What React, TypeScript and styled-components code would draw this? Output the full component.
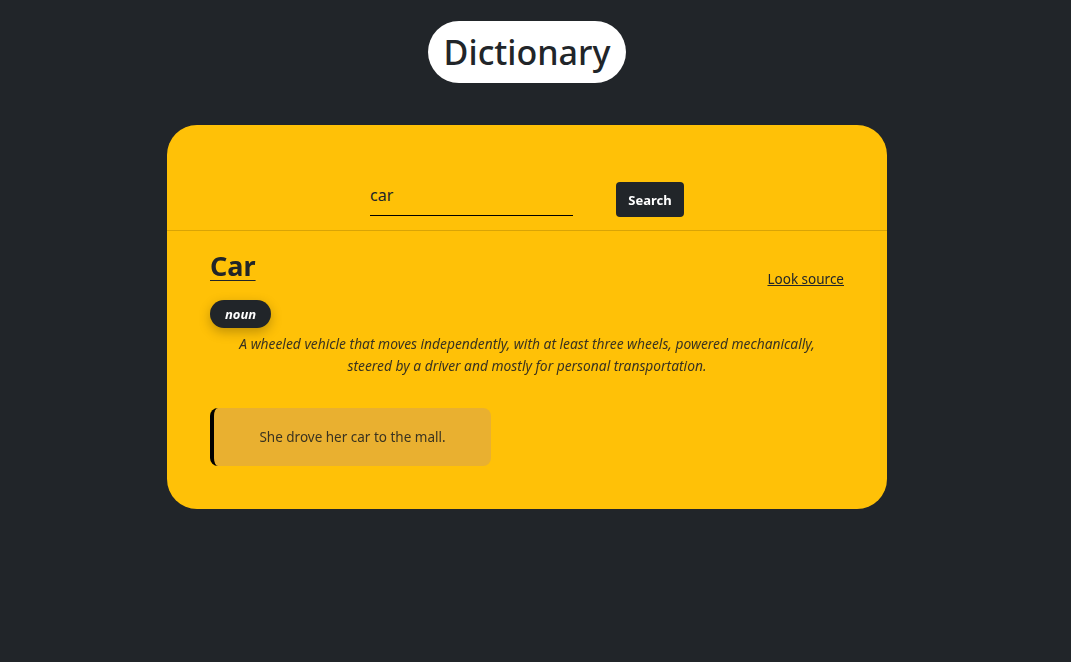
import React from "react";
import styled, { createGlobalStyle } from "styled-components";

const Global = createGlobalStyle`
  html, body { margin: 0; padding: 0; background: #212529; }
  body { font-family: "Noto Sans", "Open Sans", sans-serif; color: #212529; }
  * { box-sizing: border-box; }
`;

const Page = styled.div`
  width: 1054px;
  min-height: 662px;
  display: flex;
  flex-direction: column;
  align-items: center;
  padding-top: 21px;
`;

const TitlePill = styled.h1`
  margin: 0;
  background: #fff;
  border-radius: 32px;
  height: 62px;
  padding: 0 16px;
  display: flex;
  align-items: center;
  font-size: 34px;
  font-weight: 500;
  color: #212529;
`;

const Card = styled.main`
  margin-top: 42px;
  width: 720px;
  height: 384px;
  background: #ffc107;
  border-radius: 30px;
  display: flex;
  flex-direction: column;
`;

const SearchBar = styled.form`
  height: 106px;
  border-bottom: 1px solid #d9a406;
  display: flex;
  justify-content: center;
  align-items: flex-end;
  gap: 43px;
  padding-bottom: 14px;
`;

const Input = styled.input`
  width: 203px;
  height: 30px;
  border: none;
  border-bottom: 1px solid #000;
  background: transparent;
  font-family: inherit;
  font-size: 16px;
  color: #212529;
  padding: 0 0 12px;
  outline: none;
  caret-color: #000;
`;

const Button = styled.button`
  height: 35px;
  width: 68px;
  background: #212529;
  color: #fff;
  border: none;
  border-radius: 4px;
  font-family: inherit;
  font-weight: 700;
  font-size: 13px;
  margin-bottom: -1px;
`;

const Content = styled.section`
  padding: 17px 43px 0;
  display: flex;
  flex-direction: column;
`;

const HeadRow = styled.div`
  display: flex;
  justify-content: space-between;
  align-items: flex-start;
`;

const Word = styled.h2`
  margin: 0;
  font-size: 27px;
  font-weight: 700;
  line-height: 36px;
  text-decoration: underline;
  text-decoration-thickness: 1px;
  text-underline-offset: 4px;
`;

const SourceLink = styled.a`
  margin-top: 22px;
  font-size: 13.5px;
  color: #212529;
  text-decoration: underline;
`;

const PartOfSpeech = styled.span`
  align-self: flex-start;
  margin-top: 12px;
  background: #212529;
  color: #fff;
  font-style: italic;
  font-weight: 700;
  font-size: 13px;
  height: 28px;
  padding: 0 15px;
  border-radius: 14px;
  display: flex;
  align-items: center;
  box-shadow: 0 4px 12px rgba(0, 0, 0, 0.25);
`;

const Definition = styled.p`
  margin: 5px 0 0;
  text-align: center;
  font-style: italic;
  font-size: 13.8px;
  line-height: 22px;
  color: #3a3320;
  padding: 0 14px;
`;

const Example = styled.blockquote`
  margin: 31px 0 0;
  width: 281px;
  height: 58px;
  background: #e9b030;
  border-left: 4px solid #000;
  border-radius: 8px;
  display: flex;
  align-items: center;
  justify-content: center;
  font-size: 13.5px;
  color: #3a3320;
`;

export default function App() {
  return (
    <>
      <Global />
      <Page>
        <TitlePill>Dictionary</TitlePill>
        <Card>
          <SearchBar onSubmit={(e) => e.preventDefault()}>
            <Input defaultValue="car" autoFocus />
            <Button type="submit">Search</Button>
          </SearchBar>
          <Content>
            <HeadRow>
              <Word>Car</Word>
              <SourceLink href="#">Look source</SourceLink>
            </HeadRow>
            <PartOfSpeech>noun</PartOfSpeech>
            <Definition>
              A wheeled vehicle that moves independently, with at least three wheels, powered mechanically,
              steered by a driver and mostly for personal transportation.
            </Definition>
            <Example>She drove her car to the mall.</Example>
          </Content>
        </Card>
      </Page>
    </>
  );
}
